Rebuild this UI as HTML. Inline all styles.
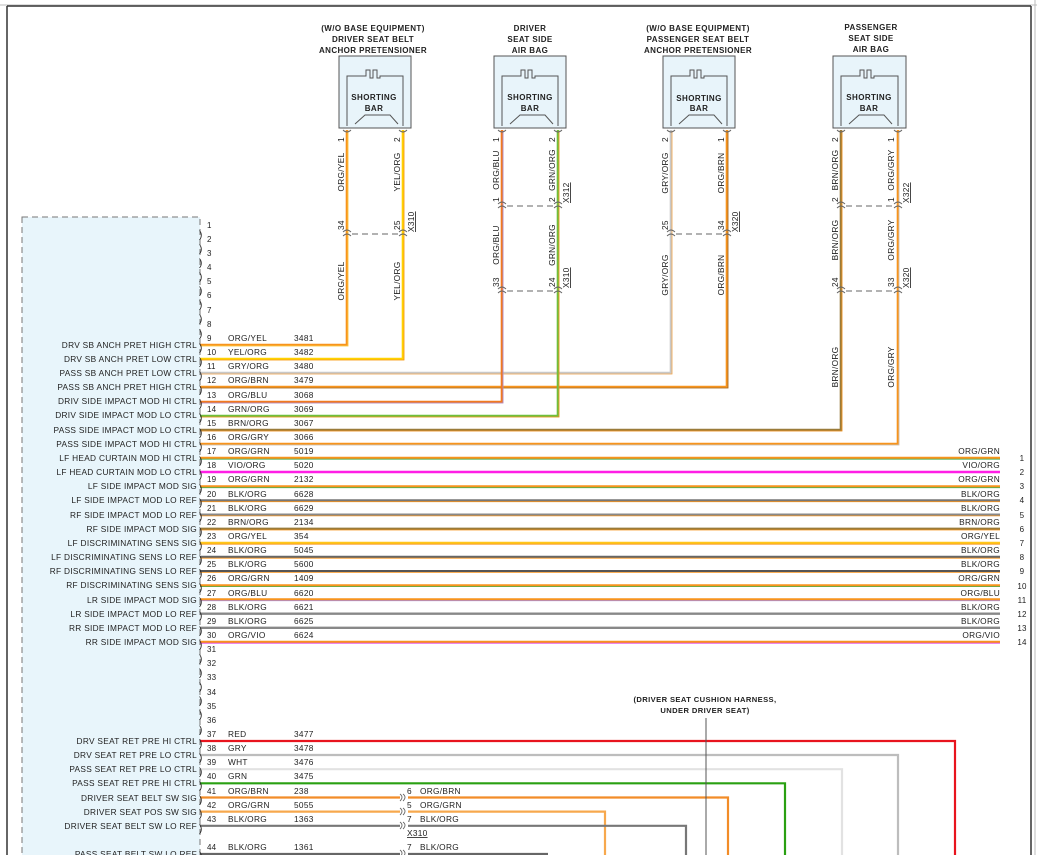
<!DOCTYPE html>
<html><head><meta charset="utf-8"><style>
html,body{margin:0;padding:0;background:#fff;}
svg{display:block;font-family:"Liberation Sans",sans-serif;}
.t{font-size:8.3px;fill:#222;letter-spacing:0.3px}
.s{font-size:8px;fill:#222;letter-spacing:0.2px}
.h{font-size:8px;fill:#222;font-weight:bold;letter-spacing:0.4px}
</style></head><body>
<svg width="1037" height="855" viewBox="0 0 1037 855" xmlns="http://www.w3.org/2000/svg">
<rect x="0" y="0" width="1037" height="855" fill="#fff"/>
<line x1="0" y1="5" x2="1037" y2="5" fill="none" stroke="#ddd" stroke-width="2"/>
<line x1="7" y1="6" x2="7" y2="855" stroke="#333" stroke-width="1.5"/>
<line x1="7" y1="6" x2="1031" y2="6" stroke="#333" stroke-width="1.5"/>
<line x1="1031" y1="6" x2="1031" y2="855" stroke="#333" stroke-width="1.5"/>
<line x1="1035" y1="0" x2="1035" y2="855" stroke="#bbb" stroke-width="1"/>

<!-- module box -->
<rect x="22" y="217" width="178" height="650" fill="#e8f5fb" stroke="#777" stroke-dasharray="6,4"/>

<!-- connector boxes -->
<g stroke="#555" fill="#e8f4fa">
<rect x="339" y="56" width="72" height="72"/>
<rect x="494" y="56" width="72" height="72"/>
<rect x="663" y="56" width="72" height="72"/>
<rect x="833" y="56" width="73" height="72"/>
</g>
<g fill="none" stroke="#555" stroke-width="1">
<path d="M347 126V76H366V70H370V78H373V70H377V78H380V76H403V126"/><path d="M355 124L365 115H390L398 124"/>
<path d="M502 126V76H521V70H525V78H528V70H532V78H535V76H558V126"/><path d="M510 124L520 115H545L553 124"/>
<path d="M671 126V76H690V70H694V78H697V70H701V78H704V76H727V126"/><path d="M679 124L689 115H714L722 124"/>
<path d="M841 126V76H860V70H864V78H867V70H871V78H874V76H898V126"/><path d="M849 124L859 115H884L892 124"/>
</g>
<g class="h" text-anchor="middle">
<text x="374" y="100">SHORTING</text><text x="374" y="111">BAR</text>
<text x="530" y="100">SHORTING</text><text x="530" y="111">BAR</text>
<text x="699" y="101">SHORTING</text><text x="699" y="111">BAR</text>
<text x="869" y="100">SHORTING</text><text x="869" y="111">BAR</text>
<text x="373" y="31">(W/O BASE EQUIPMENT)</text><text x="373" y="42">DRIVER SEAT BELT</text><text x="373" y="53">ANCHOR PRETENSIONER</text>
<text x="530" y="31">DRIVER</text><text x="530" y="42">SEAT SIDE</text><text x="530" y="53">AIR BAG</text>
<text x="698" y="31">(W/O BASE EQUIPMENT)</text><text x="698" y="42">PASSENGER SEAT BELT</text><text x="698" y="53">ANCHOR PRETENSIONER</text>
<text x="871" y="30">PASSENGER</text><text x="871" y="41">SEAT SIDE</text><text x="871" y="52">AIR BAG</text>
</g>

<!-- vertical + horizontal wires top -->
<g fill="none" stroke-linejoin="miter">
<path d="M347 130V345H200" stroke="#f7941d" stroke-width="2.6"/><path d="M347 130V345H200" stroke="#ffd24a" stroke-width="0.8" transform="translate(1,1)"/>
<path d="M403 130V359H200" stroke="#ffd200" stroke-width="2.6"/><path d="M403 130V359H200" stroke="#f7941d" stroke-width="0.8" transform="translate(1,1)"/>
<path d="M671 130V373H200" stroke="#c8c8c8" stroke-width="2.6"/><path d="M671 130V373H200" stroke="#f7a84d" stroke-width="0.8" transform="translate(1,1)"/>
<path d="M727 130V387H200" stroke="#f7941d" stroke-width="2.6"/><path d="M727 130V387H200" stroke="#a0692a" stroke-width="0.8" transform="translate(1,1)"/>
<path d="M502 130V402H200" stroke="#f27a20" stroke-width="2.6"/><path d="M502 130V402H200" stroke="#a88ad8" stroke-width="0.8" transform="translate(1,1)"/>
<path d="M558 130V416H200" stroke="#6fbf3c" stroke-width="2.6"/><path d="M558 130V416H200" stroke="#f7941d" stroke-width="0.8" transform="translate(1,1)"/>
<path d="M841 130V430H200" stroke="#9a7b3a" stroke-width="2.6"/><path d="M841 130V430H200" stroke="#f7941d" stroke-width="0.8" transform="translate(1,1)"/>
<path d="M898 130V444H200" stroke="#f7941d" stroke-width="2.6"/><path d="M898 130V444H200" stroke="#c8c8c8" stroke-width="0.8" transform="translate(1,1)"/>
</g>

<!-- right-going wires 17-30 -->
<g fill="none" stroke-width="2.4">
<line x1="200" y1="458" x2="1000" y2="458" stroke="#f7941d"/>
<line x1="200" y1="472" x2="1000" y2="472" stroke="#ff1ee6"/>
<line x1="200" y1="486.5" x2="1000" y2="486.5" stroke="#f7941d"/>
<line x1="200" y1="500.5" x2="1000" y2="500.5" stroke="#777"/>
<line x1="200" y1="514.7" x2="1000" y2="514.7" stroke="#888"/>
<line x1="200" y1="528.8" x2="1000" y2="528.8" stroke="#9a7b3a"/>
<line x1="200" y1="543" x2="1000" y2="543" stroke="#ffc61a"/>
<line x1="200" y1="557" x2="1000" y2="557" stroke="#666"/>
<line x1="200" y1="571.2" x2="1000" y2="571.2" stroke="#555"/>
<line x1="200" y1="585.4" x2="1000" y2="585.4" stroke="#f7941d"/>
<line x1="200" y1="599.5" x2="1000" y2="599.5" stroke="#f7941d"/>
<line x1="200" y1="613.7" x2="1000" y2="613.7" stroke="#888"/>
<line x1="200" y1="627.8" x2="1000" y2="627.8" stroke="#888"/>
<line x1="200" y1="642" x2="1000" y2="642" stroke="#f7941d"/>
</g>
<g fill="none" stroke-width="0.8">
<line x1="200" y1="459.2" x2="1000" y2="459.2" stroke="#4caf50"/>
<line x1="200" y1="487.7" x2="1000" y2="487.7" stroke="#4caf50"/>
<line x1="200" y1="501.7" x2="1000" y2="501.7" stroke="#f7941d"/>
<line x1="200" y1="515.9" x2="1000" y2="515.9" stroke="#f7941d"/>
<line x1="200" y1="530" x2="1000" y2="530" stroke="#f7941d"/>
<line x1="200" y1="544.2" x2="1000" y2="544.2" stroke="#f7941d"/>
<line x1="200" y1="558.2" x2="1000" y2="558.2" stroke="#f7941d"/>
<line x1="200" y1="572.4" x2="1000" y2="572.4" stroke="#f7941d"/>
<line x1="200" y1="586.6" x2="1000" y2="586.6" stroke="#4caf50"/>
<line x1="200" y1="600.7" x2="1000" y2="600.7" stroke="#a88ad8"/>
<line x1="200" y1="643.2" x2="1000" y2="643.2" stroke="#e040e0"/>
</g>

<!-- bottom wires -->
<g fill="none" stroke-width="2.2">
<path d="M200 741H955V855" stroke="#e8141e"/>
<path d="M200 755H898V855" stroke="#bdbdbd"/>
<path d="M200 769.2H842V855" stroke="#e2e2e2"/>
<path d="M200 783.3H785V855" stroke="#2aa012"/>
<path d="M200 797.5H400M408 797.5H728V855" stroke="#f28c28"/>
<path d="M200 811.6H400M408 811.6H605V855" stroke="#f7a84d"/>
<path d="M200 825.8H400M408 825.8H686V855" stroke="#777"/>
<path d="M200 854H400M408 854H548" stroke="#666"/>
</g>
<line x1="706" y1="718" x2="706" y2="855" stroke="#555" stroke-width="1"/>
<g class="h" text-anchor="middle" style="font-weight:bold;font-size:7.6px">
<text x="705" y="702">(DRIVER SEAT CUSHION HARNESS,</text><text x="705" y="713">UNDER DRIVER SEAT)</text>
</g>

<!-- breaks on vertical wires -->
<g fill="none" stroke="#666" stroke-width="0.9">
<line x1="352" y1="234" x2="398" y2="234" stroke-dasharray="6,4"/>
<line x1="507" y1="206" x2="553" y2="206" stroke-dasharray="6,4"/>
<line x1="507" y1="291" x2="553" y2="291" stroke-dasharray="6,4"/>
<line x1="676" y1="234" x2="722" y2="234" stroke-dasharray="6,4"/>
<line x1="846" y1="206" x2="893" y2="206" stroke-dasharray="6,4"/>
<line x1="846" y1="291" x2="893" y2="291" stroke-dasharray="6,4"/>
<path d="M343 232Q347 228 351 232M343 236Q347 232 351 236M399 232Q403 228 407 232M399 236Q403 232 407 236"/>
<path d="M498 204Q502 200 506 204M498 208Q502 204 506 208M554 204Q558 200 562 204M554 208Q558 204 562 208"/>
<path d="M498 289Q502 285 506 289M498 293Q502 289 506 293M554 289Q558 285 562 289M554 293Q558 289 562 293"/>
<path d="M667 232Q671 228 675 232M667 236Q671 232 675 236M723 232Q727 228 731 232M723 236Q727 232 731 236"/>
<path d="M837 204Q841 200 845 204M837 208Q841 204 845 208M894 204Q898 200 902 204M894 208Q898 204 902 208"/>
<path d="M837 289Q841 285 845 289M837 293Q841 289 845 293M894 289Q898 285 902 289M894 293Q898 289 902 293"/>
<path d="M343 130Q347 134 351 130M399 130Q403 134 407 130M498 130Q502 134 506 130M554 130Q558 134 562 130M667 130Q671 134 675 130M723 130Q727 134 731 130M837 130Q841 134 845 130M894 130Q898 134 902 130"/>
<path d="M400 794Q404 797 400 801M403 794Q407 797 403 801M400 808Q404 811 400 815M403 808Q407 811 403 815M400 822Q404 825 400 829M403 822Q407 825 403 829M400 850Q404 853 400 857M403 850Q407 853 403 857"/>
</g>

<!-- vertical labels -->
<g class="t">
<g text-anchor="middle">
<text transform="translate(344,172) rotate(-90)">ORG/YEL</text>
<text transform="translate(400,172) rotate(-90)">YEL/ORG</text>
<text transform="translate(344,281) rotate(-90)">ORG/YEL</text>
<text transform="translate(400,281) rotate(-90)">YEL/ORG</text>
<text transform="translate(499,170) rotate(-90)">ORG/BLU</text>
<text transform="translate(555,170) rotate(-90)">GRN/ORG</text>
<text transform="translate(499,245) rotate(-90)">ORG/BLU</text>
<text transform="translate(555,245) rotate(-90)">GRN/ORG</text>
<text transform="translate(668,173) rotate(-90)">GRY/ORG</text>
<text transform="translate(724,173) rotate(-90)">ORG/BRN</text>
<text transform="translate(668,275) rotate(-90)">GRY/ORG</text>
<text transform="translate(724,275) rotate(-90)">ORG/BRN</text>
<text transform="translate(838,170) rotate(-90)">BRN/ORG</text>
<text transform="translate(894,170) rotate(-90)">ORG/GRY</text>
<text transform="translate(838,240) rotate(-90)">BRN/ORG</text>
<text transform="translate(894,240) rotate(-90)">ORG/GRY</text>
<text transform="translate(838,367) rotate(-90)">BRN/ORG</text>
<text transform="translate(894,367) rotate(-90)">ORG/GRY</text>
</g>
<g>
<text transform="translate(344,142) rotate(-90)">1</text><text transform="translate(400,142) rotate(-90)">2</text>
<text transform="translate(344,230) rotate(-90)">34</text><text transform="translate(400,230) rotate(-90)">25</text>
<text transform="translate(499,142) rotate(-90)">1</text><text transform="translate(555,142) rotate(-90)">2</text>
<text transform="translate(499,202) rotate(-90)">1</text><text transform="translate(555,202) rotate(-90)">2</text>
<text transform="translate(499,287) rotate(-90)">33</text><text transform="translate(555,287) rotate(-90)">24</text>
<text transform="translate(668,142) rotate(-90)">2</text><text transform="translate(724,142) rotate(-90)">1</text>
<text transform="translate(668,230) rotate(-90)">25</text><text transform="translate(724,230) rotate(-90)">34</text>
<text transform="translate(838,142) rotate(-90)">2</text><text transform="translate(894,142) rotate(-90)">1</text>
<text transform="translate(838,202) rotate(-90)">2</text><text transform="translate(894,202) rotate(-90)">1</text>
<text transform="translate(838,287) rotate(-90)">24</text><text transform="translate(894,287) rotate(-90)">33</text>
<text transform="translate(414,232) rotate(-90)" text-decoration="underline">X310</text>
<text transform="translate(569,203) rotate(-90)" text-decoration="underline">X312</text>
<text transform="translate(569,288) rotate(-90)" text-decoration="underline">X310</text>
<text transform="translate(738,232) rotate(-90)" text-decoration="underline">X320</text>
<text transform="translate(909,203) rotate(-90)" text-decoration="underline">X322</text>
<text transform="translate(909,288) rotate(-90)" text-decoration="underline">X320</text>
</g>
</g>

<!-- pin brackets -->
<g class="t" fill="#444" style="font-size:10px">
<text x="199" y="238">)</text><text x="199" y="252">)</text><text x="199" y="266">)</text><text x="199" y="280">)</text><text x="199" y="294">)</text><text x="199" y="308">)</text><text x="199" y="322">)</text><text x="199" y="337">)</text>
<text x="199" y="351">)</text><text x="199" y="365">)</text><text x="199" y="379">)</text><text x="199" y="393">)</text><text x="199" y="407">)</text><text x="199" y="421">)</text><text x="199" y="436">)</text><text x="199" y="450">)</text>
<text x="199" y="464">)</text><text x="199" y="478">)</text><text x="199" y="492">)</text><text x="199" y="506">)</text><text x="199" y="520">)</text><text x="199" y="535">)</text><text x="199" y="549">)</text><text x="199" y="563">)</text>
<text x="199" y="577">)</text><text x="199" y="591">)</text><text x="199" y="605">)</text><text x="199" y="619">)</text><text x="199" y="634">)</text><text x="199" y="648">)</text><text x="199" y="662">)</text><text x="199" y="676">)</text>
<text x="199" y="690">)</text><text x="199" y="704">)</text><text x="199" y="718">)</text><text x="199" y="733">)</text><text x="199" y="747">)</text><text x="199" y="761">)</text><text x="199" y="775">)</text><text x="199" y="789">)</text>
<text x="199" y="803">)</text><text x="199" y="817">)</text><text x="199" y="832">)</text><text x="199" y="859">)</text>
</g>

<!-- pin numbers -->
<g class="s">
<text x="207" y="228">1</text><text x="207" y="242">2</text><text x="207" y="256">3</text><text x="207" y="270">4</text><text x="207" y="284">5</text><text x="207" y="298">6</text><text x="207" y="313">7</text><text x="207" y="327">8</text>
<text x="207" y="341">9</text><text x="207" y="355">10</text><text x="207" y="369">11</text><text x="207" y="383">12</text><text x="207" y="398">13</text><text x="207" y="412">14</text><text x="207" y="426">15</text><text x="207" y="440">16</text>
<text x="207" y="454">17</text><text x="207" y="468">18</text><text x="207" y="482">19</text><text x="207" y="497">20</text><text x="207" y="511">21</text><text x="207" y="525">22</text><text x="207" y="539">23</text><text x="207" y="553">24</text>
<text x="207" y="567">25</text><text x="207" y="581">26</text><text x="207" y="596">27</text><text x="207" y="610">28</text><text x="207" y="624">29</text><text x="207" y="638">30</text><text x="207" y="652">31</text><text x="207" y="666">32</text>
<text x="207" y="680">33</text><text x="207" y="695">34</text><text x="207" y="709">35</text><text x="207" y="723">36</text><text x="207" y="737">37</text><text x="207" y="751">38</text><text x="207" y="765">39</text><text x="207" y="779">40</text>
<text x="207" y="794">41</text><text x="207" y="808">42</text><text x="207" y="822">43</text><text x="207" y="850">44</text>
</g>
<g class="t">
<text x="228" y="341">ORG/YEL</text><text x="294" y="341">3481</text>
<text x="228" y="355">YEL/ORG</text><text x="294" y="355">3482</text>
<text x="228" y="369">GRY/ORG</text><text x="294" y="369">3480</text>
<text x="228" y="383">ORG/BRN</text><text x="294" y="383">3479</text>
<text x="228" y="398">ORG/BLU</text><text x="294" y="398">3068</text>
<text x="228" y="412">GRN/ORG</text><text x="294" y="412">3069</text>
<text x="228" y="426">BRN/ORG</text><text x="294" y="426">3067</text>
<text x="228" y="440">ORG/GRY</text><text x="294" y="440">3066</text>
<text x="228" y="454">ORG/GRN</text><text x="294" y="454">5019</text>
<text x="228" y="468">VIO/ORG</text><text x="294" y="468">5020</text>
<text x="228" y="482">ORG/GRN</text><text x="294" y="482">2132</text>
<text x="228" y="497">BLK/ORG</text><text x="294" y="497">6628</text>
<text x="228" y="511">BLK/ORG</text><text x="294" y="511">6629</text>
<text x="228" y="525">BRN/ORG</text><text x="294" y="525">2134</text>
<text x="228" y="539">ORG/YEL</text><text x="294" y="539">354</text>
<text x="228" y="553">BLK/ORG</text><text x="294" y="553">5045</text>
<text x="228" y="567">BLK/ORG</text><text x="294" y="567">5600</text>
<text x="228" y="581">ORG/GRN</text><text x="294" y="581">1409</text>
<text x="228" y="596">ORG/BLU</text><text x="294" y="596">6620</text>
<text x="228" y="610">BLK/ORG</text><text x="294" y="610">6621</text>
<text x="228" y="624">BLK/ORG</text><text x="294" y="624">6625</text>
<text x="228" y="638">ORG/VIO</text><text x="294" y="638">6624</text>
<text x="228" y="737">RED</text><text x="294" y="737">3477</text>
<text x="228" y="751">GRY</text><text x="294" y="751">3478</text>
<text x="228" y="765">WHT</text><text x="294" y="765">3476</text>
<text x="228" y="779">GRN</text><text x="294" y="779">3475</text>
<text x="228" y="794">ORG/BRN</text><text x="294" y="794">238</text>
<text x="228" y="808">ORG/GRN</text><text x="294" y="808">5055</text>
<text x="228" y="822">BLK/ORG</text><text x="294" y="822">1363</text>
<text x="228" y="850">BLK/ORG</text><text x="294" y="850">1361</text>
<text x="407" y="794">6</text><text x="420" y="794">ORG/BRN</text>
<text x="407" y="808">5</text><text x="420" y="808">ORG/GRN</text>
<text x="407" y="822">7</text><text x="420" y="822">BLK/ORG</text>
<text x="407" y="836" text-decoration="underline">X310</text>
<text x="407" y="850">7</text><text x="420" y="850">BLK/ORG</text>
</g>

<!-- left labels -->
<g class="t" text-anchor="end">
<text x="197" y="348">DRV SB ANCH PRET HIGH CTRL</text>
<text x="197" y="362">DRV SB ANCH PRET LOW CTRL</text>
<text x="197" y="376">PASS SB ANCH PRET LOW CTRL</text>
<text x="197" y="390">PASS SB ANCH PRET HIGH CTRL</text>
<text x="197" y="404">DRIV SIDE IMPACT MOD HI CTRL</text>
<text x="197" y="418">DRIV SIDE IMPACT MOD LO CTRL</text>
<text x="197" y="433">PASS SIDE IMPACT MOD LO CTRL</text>
<text x="197" y="447">PASS SIDE IMPACT MOD HI CTRL</text>
<text x="197" y="461">LF HEAD CURTAIN MOD HI CTRL</text>
<text x="197" y="475">LF HEAD CURTAIN MOD LO CTRL</text>
<text x="197" y="489">LF SIDE IMPACT MOD SIG</text>
<text x="197" y="503">LF SIDE IMPACT MOD LO REF</text>
<text x="197" y="518">RF SIDE IMPACT MOD LO REF</text>
<text x="197" y="532">RF SIDE IMPACT MOD SIG</text>
<text x="197" y="546">LF DISCRIMINATING SENS SIG</text>
<text x="197" y="560">LF DISCRIMINATING SENS LO REF</text>
<text x="197" y="574">RF DISCRIMINATING SENS LO REF</text>
<text x="197" y="588">RF DISCRIMINATING SENS SIG</text>
<text x="197" y="603">LR SIDE IMPACT MOD SIG</text>
<text x="197" y="617">LR SIDE IMPACT MOD LO REF</text>
<text x="197" y="631">RR SIDE IMPACT MOD LO REF</text>
<text x="197" y="645">RR SIDE IMPACT MOD SIG</text>
<text x="197" y="744">DRV SEAT RET PRE HI CTRL</text>
<text x="197" y="758">DRV SEAT RET PRE LO CTRL</text>
<text x="197" y="772">PASS SEAT RET PRE LO CTRL</text>
<text x="197" y="786">PASS SEAT RET PRE HI CTRL</text>
<text x="197" y="801">DRIVER SEAT BELT SW SIG</text>
<text x="197" y="815">DRIVER SEAT POS SW SIG</text>
<text x="197" y="829">DRIVER SEAT BELT SW LO REF</text>
<text x="197" y="857">PASS SEAT BELT SW LO REF</text>
</g>

<!-- right labels -->
<g class="t" text-anchor="end">
<text x="1000" y="454">ORG/GRN</text><text x="1000" y="468">VIO/ORG</text><text x="1000" y="482">ORG/GRN</text><text x="1000" y="497">BLK/ORG</text>
<text x="1000" y="511">BLK/ORG</text><text x="1000" y="525">BRN/ORG</text><text x="1000" y="539">ORG/YEL</text><text x="1000" y="553">BLK/ORG</text>
<text x="1000" y="567">BLK/ORG</text><text x="1000" y="581">ORG/GRN</text><text x="1000" y="596">ORG/BLU</text><text x="1000" y="610">BLK/ORG</text>
<text x="1000" y="624">BLK/ORG</text><text x="1000" y="638">ORG/VIO</text>
</g>
<g class="s" text-anchor="middle">
<text x="1022" y="461">1</text><text x="1022" y="475">2</text><text x="1022" y="489">3</text><text x="1022" y="503">4</text>
<text x="1022" y="518">5</text><text x="1022" y="532">6</text><text x="1022" y="546">7</text><text x="1022" y="560">8</text>
<text x="1022" y="574">9</text><text x="1022" y="589">10</text><text x="1022" y="603">11</text><text x="1022" y="617">12</text>
<text x="1022" y="631">13</text><text x="1022" y="645">14</text>
</g>
</svg>
</body></html>
